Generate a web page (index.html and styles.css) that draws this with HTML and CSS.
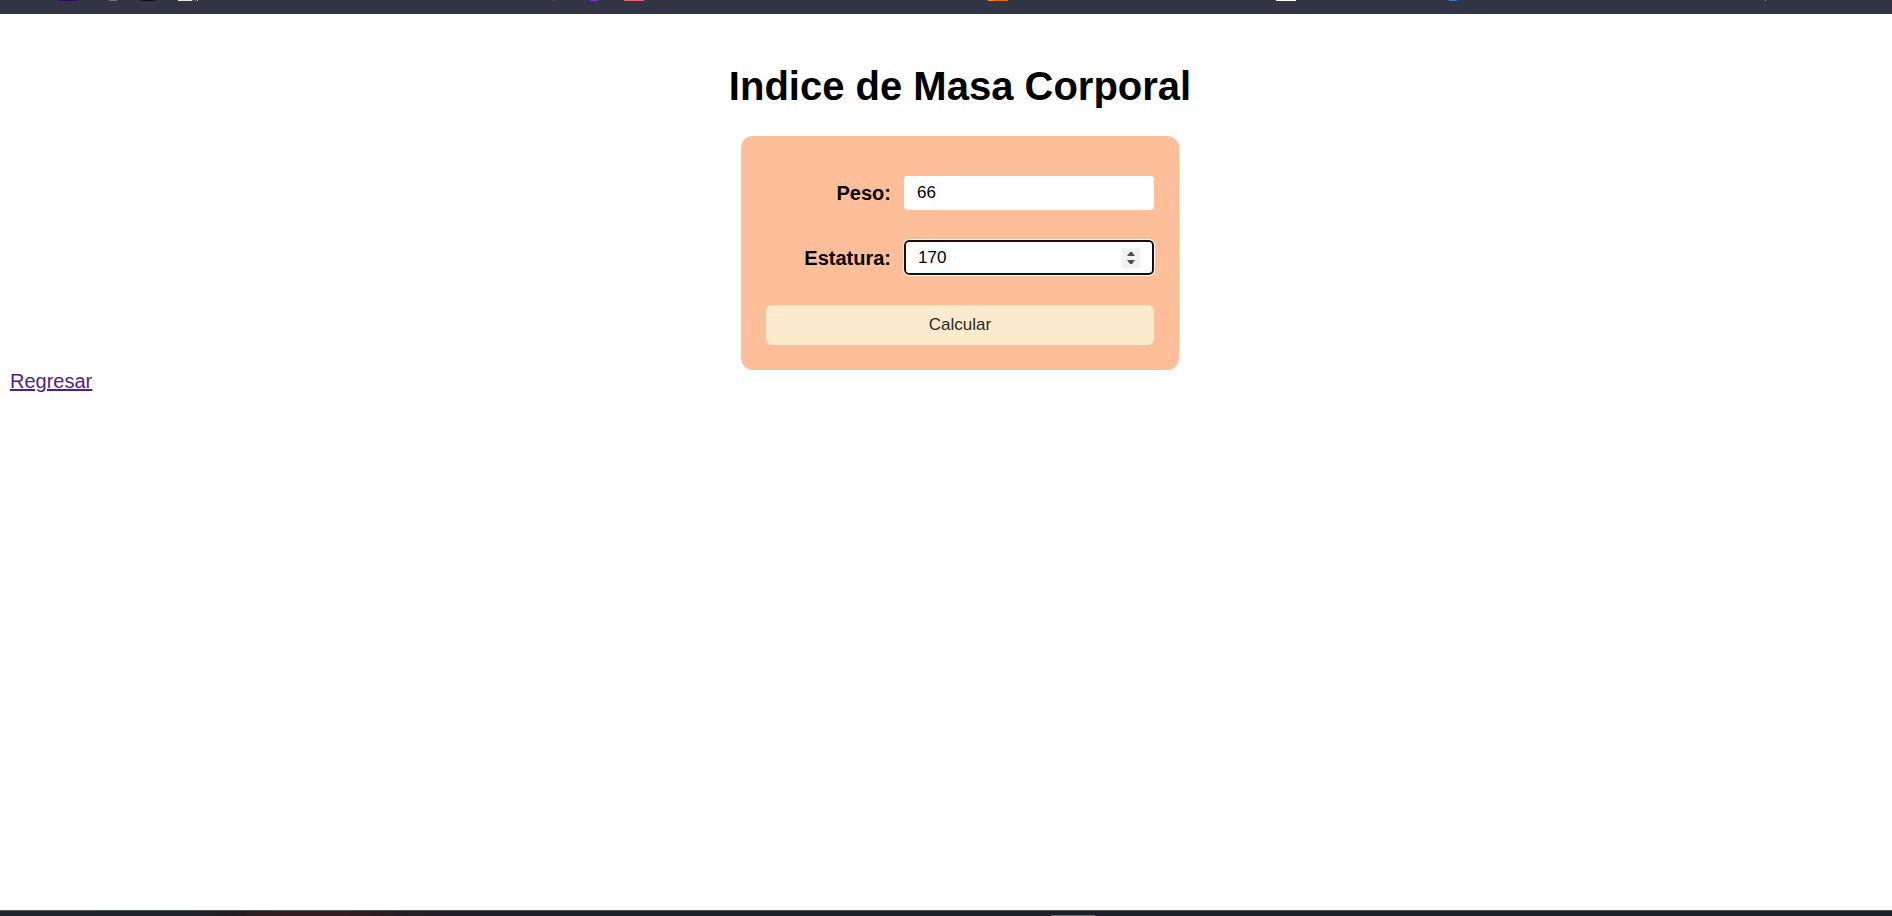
FILE: index.html
```html
<!DOCTYPE html>
<html lang="es">
<head>
<meta charset="utf-8">
<title>Indice de Masa Corporal</title>
<link rel="stylesheet" href="styles.css">
</head>
<body>
<div class="top-bar" aria-hidden="true">
  <svg class="top-icons" width="1892" height="1">
    <rect x="58" width="20" height="1" fill="#2d0a66"/>
    <rect x="109" width="8" height="1" fill="#70737c"/>
    <rect x="140" width="16" height="1" fill="#10131c"/>
    <rect x="178" width="14" height="1" fill="#e4e8e0"/>
    <rect x="192" width="5" height="1" fill="#55564f"/>
    <rect x="197" width="1" height="1" fill="#ffffff"/>
    <rect x="553" width="2" height="1" fill="#575a66"/>
    <rect x="590" width="8" height="1" fill="#8b2fd6"/>
    <rect x="624" width="20" height="1" fill="#e8657c"/>
    <rect x="988" width="6" height="1" fill="#f28c0c"/>
    <rect x="994" width="14" height="1" fill="#dc6c10"/>
    <rect x="1276" width="20" height="1" fill="#ffffff"/>
    <rect x="1449" width="8" height="1" fill="#2f78dc"/>
    <rect x="1765" width="1" height="1" fill="#9a9ca4"/>
  </svg>
</div>
<main class="page">
  <section class="calculator">
    <h1 class="title">Indice de Masa Corporal</h1>
    <form class="form">
      <div class="field">
        <label class="label" for="peso">Peso:</label>
        <input class="input" type="number" id="peso" name="peso" value="66">
      </div>
      <div class="field">
        <label class="label" for="estatura">Estatura:</label>
        <input class="input input-active" type="number" id="estatura" name="estatura" value="170">
      </div>
      <button class="button" type="button">Calcular</button>
    </form>
  </section>
  <a class="back" href="#">Regresar</a>
</main>
<div class="bottom-bar" aria-hidden="true"><div class="bottom-tab"></div></div>
</body>
</html>
```
FILE: styles.css
```css
* {
  box-sizing: border-box;
}

body {
  display: flex;
  flex-direction: column;
  min-height: 100vh;
  margin: 0;
  background: #fff;
  color: #000;
  font-family: "Liberation Sans", Arial, sans-serif;
  font-size: 20px;
  line-height: 22px;
}

.top-bar {
  height: 14px;
  overflow: hidden;
  background: #323543;
}

.top-icons {
  display: block;
}

.page {
  flex: 1;
  padding: 0 10px;
}

.calculator {
  display: flex;
  flex-direction: column;
  align-items: center;
  padding: 49px 0 0 28px;
}

.title {
  margin: 0 0 27px;
  font-size: 40px;
  line-height: 46px;
}

.form {
  display: flex;
  flex-direction: column;
  gap: 30px;
  padding: 40px 25px 25px;
  border-radius: 12px;
  background: #ffbe9a;
}

.field {
  display: grid;
  grid-template-columns: 125px 250px;
  gap: 13px;
  align-items: center;
}

.label {
  font-weight: bold;
  text-align: right;
}

.input {
  width: 100%;
  height: 34px;
  padding: 0 13px;
  border: 0;
  border-radius: 4px;
  background: #fff;
  color: #000;
  font-family: inherit;
  font-size: 17px;
}

.input-active {
  height: 35px;
  outline: 1px solid #fff;
  border: 2px solid #101010;
  padding: 0 12px;
  border-radius: 5px;
}

.input-active::-webkit-inner-spin-button {
  appearance: none;
  width: 18px;
  height: 20px;
  opacity: 1;
  background: #f1f1f1 url("data:image/svg+xml,%3Csvg xmlns='http://www.w3.org/2000/svg' width='18' height='20'%3E%3Cpath d='M5 8 L8 4 H10 L13 8 Z M5 12 H13 L10 16 H8 Z' fill='%23505050'/%3E%3C/svg%3E") center no-repeat;
}

.button {
  height: 40px;
  border: 0;
  border-radius: 6px;
  background: #faebcd;
  color: #2b2925;
  font-family: inherit;
  font-size: 17px;
}

.back {
  color: #551a8b;
}

.bottom-bar {
  display: flex;
  align-items: flex-end;
  height: 6px;
  border-top: 1px solid #4d5454;
  background: linear-gradient(90deg, #1c262b 0, #1d2328 10%, #221f23 12%, #351c20 15%, #351c20 18%, #221f25 22%, #1c2028 30%, #1c2028 100%);
}

.bottom-tab {
  width: 44px;
  height: 1px;
  margin-left: 1051px;
  background: #66676c;
}
```
